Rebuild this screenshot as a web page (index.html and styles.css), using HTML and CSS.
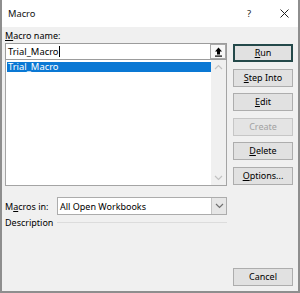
FILE: index.html
```html
<!DOCTYPE html>
<html>
<head>
<meta charset="utf-8">
<link rel="stylesheet" href="styles.css">
</head>
<body>
<div class="window">
  <div class="titlebar">
    <span class="title">Macro</span>
    <span class="help">?</span>
    <svg class="close" width="9" height="9" viewBox="0 0 9 9"><path d="M0.5 0.5L8.5 8.5M8.5 0.5L0.5 8.5" stroke="#222" stroke-width="1"/></svg>
  </div>
  <div class="content">
    <div class="left">
      <div class="label"><u>M</u>acro name:</div>
      <div class="input">
        <span class="input-text">Trial_Macro</span><span class="caret"></span>
        <span class="upbtn"><svg width="9" height="10" viewBox="0 0 9 10"><path d="M4.5 0.5L8 4.5H6V7.5H3V4.5H1Z" fill="#000"/><rect x="1" y="8.5" width="7" height="1.2" fill="#000"/></svg></span>
      </div>
      <div class="listbox">
        <div class="items">
          <div class="item selected">Trial_Macro</div>
        </div>
        <div class="scrollbar">
          <svg width="9" height="6" viewBox="0 0 9 6"><path d="M1 5L4.5 1.5L8 5" fill="none" stroke="#c2c2c2" stroke-width="1.2"/></svg>
          <svg width="9" height="6" viewBox="0 0 9 6"><path d="M1 1L4.5 4.5L8 1" fill="none" stroke="#c2c2c2" stroke-width="1.2"/></svg>
        </div>
      </div>
      <div class="row-in">
        <span class="label-in">M<u>a</u>cros in:</span>
        <div class="combo">
          <span class="combo-text">All Open Workbooks</span>
          <span class="combo-btn"><svg width="9" height="6" viewBox="0 0 9 6"><path d="M1 1L4.5 4.5L8 1" fill="none" stroke="#707070" stroke-width="1.2"/></svg></span>
        </div>
      </div>
      <div class="desc-row">
        <span class="desc">Description</span>
        <span class="desc-line"></span>
      </div>
    </div>
    <div class="right">
      <div class="btn default"><u>R</u>un</div>
      <div class="btn"><u>S</u>tep Into</div>
      <div class="btn"><u>E</u>dit</div>
      <div class="btn disabled">Create</div>
      <div class="btn"><u>D</u>elete</div>
      <div class="btn"><u>O</u>ptions...</div>
      <div class="btn cancel">Cancel</div>
    </div>
  </div>
</div>
</body>
</html>
```
FILE: styles.css
```css
* { box-sizing: border-box; }
html, body { margin: 0; padding: 0; }
body {
  width: 300px;
  height: 293px;
  overflow: hidden;
  font-family: "Noto Sans", "DejaVu Sans", sans-serif;
  font-size: 9px;
  color: #000;
  background: #fff;
}
u { text-decoration: underline; text-underline-offset: 1px; }
.window {
  width: 300px;
  height: 293px;
  display: flex;
  flex-direction: column;
  border-left: 2px solid #8e8e8e;
  border-right: 2px solid #8e8e8e;
  border-bottom: 2px solid #8e8e8e;
  background: #f0f0f0;
}
.titlebar {
  height: 27px;
  background: #fff;
  display: flex;
  align-items: center;
  padding-left: 6px;
  flex: none;
}
.title { font-size: 9.3px; color: #111; }
.help { margin-left: auto; font-size: 9.5px; color: #222; margin-right: 29px; }
.close { margin-right: 9px; }
.content {
  flex: 1;
  display: flex;
  gap: 6px;
  padding: 3px 3px 3px 3px;
}
.left {
  width: 222px;
  display: flex;
  flex-direction: column;
}
.label { height: 12px; line-height: 12px; margin-bottom: 1px; }
.input {
  height: 17px;
  background: #fff;
  border: 1px solid #9c9c9c;
  display: flex;
  align-items: center;
  padding-left: 2px;
  position: relative;
  z-index: 1;
}
.input-text { line-height: 13px; font-size: 9.4px; }
.caret { width: 1px; height: 11px; background: #000; margin-left: 0; }
.upbtn {
  margin-left: auto;
  width: 16px;
  height: 15px;
  border: 1px solid #a8a8a8;
  background: #f7f7f7;
  display: flex;
  align-items: center;
  justify-content: center;
}
.listbox {
  height: 127px;
  margin-top: -1px;
  background: #fff;
  border: 1px solid #a4a4a4;
  display: flex;
}
.items { flex: 1; padding: 2px 0 0 1px; }
.item { height: 10px; line-height: 10px; padding-left: 1px; font-size: 9.4px; }
.item.selected { background: #0a78d4; color: #fff; }
.scrollbar {
  width: 15px;
  background: #f0f0f0;
  display: flex;
  flex-direction: column;
  justify-content: space-between;
  align-items: center;
  padding: 4px 0 4px;
}
.row-in {
  margin-top: 11px;
  display: flex;
  align-items: center;
}
.label-in { width: 52px; }
.combo {
  flex: 1;
  height: 18px;
  background: #fff;
  border: 1px solid #acacac;
  display: flex;
  align-items: center;
  padding-left: 2px;
}
.combo-btn {
  margin-left: auto;
  width: 15px;
  height: 16px;
  background: #e6e6e6;
  border-left: 1px solid #c4c4c4;
  display: flex;
  align-items: center;
  justify-content: center;
}
.desc-row {
  margin-top: 2px;
  height: 12px;
  display: flex;
  align-items: center;
}
.desc { width: 52px; line-height: 12px; }
.desc-line { flex: 1; height: 1px; background: #dcdcdc; margin-top: -1px; }
.right {
  width: 60px;
  display: flex;
  flex-direction: column;
  gap: 6.5px;
  padding-top: 14px;
  padding-bottom: 2px;
}
.btn {
  height: 18px;
  background: #e1e1e1;
  border: 1px solid #adadad;
  display: flex;
  align-items: center;
  justify-content: center;
  line-height: 12px;
}
.btn.default { border: 2px solid #24494a; }
.btn.disabled { color: #a2a2a2; border-color: #c6c6c6; background: #e4e4e4; }
.btn.cancel { margin-top: auto; }
```
